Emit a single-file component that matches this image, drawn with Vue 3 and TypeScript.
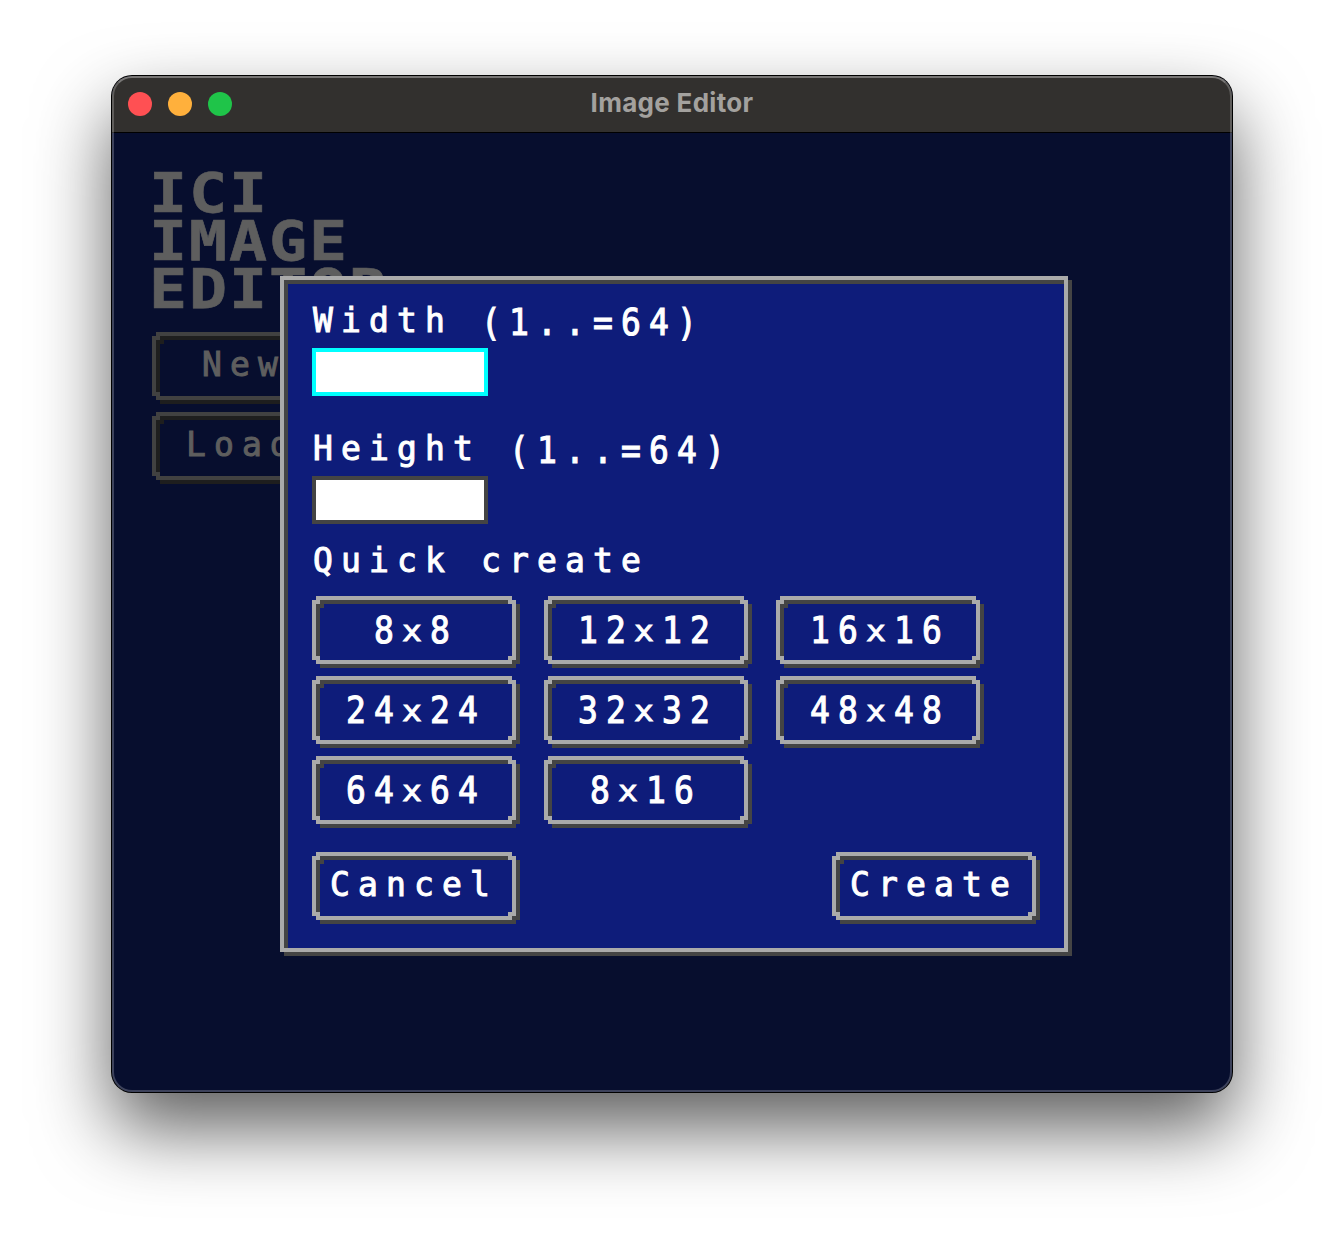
<script setup lang="ts">
import { defineComponent, h } from 'vue'

// Letters sit on a 24px cap height, figures and signs on a taller 28px one.
const runClass = (run: string): string => {
  if (run === 'x') return 'run times'
  return /[A-Za-z ]/.test(run) ? 'run' : 'run tall'
}

const PixelText = defineComponent({
  props: { text: { type: String, required: true } },
  setup(props) {
    return () =>
      h(
        'span',
        { class: 'pixel-text' },
        (props.text.match(/[A-Za-z ]+|[^A-Za-z ]+/g) ?? []).map((run) =>
          h('span', { class: runClass(run) }, run),
        ),
      )
  },
})

// Stepped-corner button outline, drawn on a 4px grid.
const PixelButton = defineComponent({
  props: {
    label: { type: String, required: true },
    width: { type: Number, default: 204 },
  },
  setup(props) {
    return () => {
      const w = props.width
      const light =
        `M4 0H${w - 4}V4H4Z M0 4H4V64H0Z M4 4H8V8H4Z M${w - 8} 4H${w - 4}V8H${w - 8}Z ` +
        `M${w - 4} 4H${w}V64H${w - 4}Z M4 64H${w - 4}V68H4Z M4 60H8V64H4Z M${w - 8} 60H${w - 4}V64H${w - 8}Z`
      const dark =
        `M8 4H${w - 8}V8H8Z M4 8H8V60H4Z M8 8H12V12H8Z M${w} 8H${w + 4}V68H${w}Z ` +
        `M${w - 4} 64H${w}V68H${w - 4}Z M8 68H${w}V72H8Z`
      return h(
        'button',
        {
          type: 'button',
          class: ['pixel-button', { odd: props.label.length % 2 === 1 }],
          style: { width: `${w}px` },
        },
        [
          h('svg', { class: 'frame', width: w + 4, height: 72, 'aria-hidden': 'true' }, [
            h('path', { class: 'dark', d: dark }),
            h('path', { class: 'light', d: light }),
          ]),
          h(PixelText, { text: props.label }),
        ],
      )
    }
  },
})

const sizes: string[] = ['8x8', '12x12', '16x16', '24x24', '32x32', '48x48', '64x64', '8x16']
</script>

<template>
  <div class="desktop">
    <div class="window">
      <header class="titlebar">
        <div class="lights">
          <i class="close"></i>
          <i class="minimise"></i>
          <i class="zoom"></i>
        </div>
        <span class="caption">Image Editor</span>
      </header>

      <main class="content">
        <h1 class="logo">
          <span>ICI</span>
          <span>IMAGE</span>
          <span>EDITOR</span>
        </h1>
        <nav class="menu">
          <PixelButton label="New" :width="180" />
          <PixelButton label="Load" :width="180" />
        </nav>

        <section class="modal">
          <PixelText class="label" text="Width (1..=64)" />
          <input class="field" aria-label="Width" />
          <PixelText class="label second" text="Height (1..=64)" />
          <input class="field plain" aria-label="Height" />
          <PixelText class="label third" text="Quick create" />
          <div class="sizes">
            <PixelButton v-for="s in sizes" :key="s" :label="s" />
          </div>
          <footer class="actions">
            <PixelButton label="Cancel" />
            <PixelButton label="Create" />
          </footer>
        </section>
      </main>
    </div>
  </div>
</template>

<style>
body {
  margin: 0;
  background: #fff;
}
.pixel-text {
  display: flex;
  height: 32px;
  font: 33px/32px 'DejaVu Sans Mono', monospace;
  letter-spacing: 8.13px;
  white-space: pre;
  -webkit-text-stroke: 1px currentColor;
}
.pixel-text .run {
  display: block;
}
.pixel-text .tall {
  transform: scaleY(1.14);
  transform-origin: 0 3px;
}
.pixel-text .times {
  transform: translateY(1px) scaleY(0.88);
  transform-origin: 0 27px;
}
.pixel-button {
  position: relative;
  display: flex;
  justify-content: center;
  box-sizing: border-box;
  height: 68px;
  margin: 0;
  padding: 17px 0 0;
  border: 0;
  background: none;
  color: inherit;
}
.pixel-button.odd {
  padding-left: 4px;
}
.pixel-button .frame {
  position: absolute;
  left: 0;
  top: 0;
  shape-rendering: crispEdges;
}
.pixel-button .light {
  fill: var(--light);
}
.pixel-button .dark {
  fill: var(--dark);
}
</style>

<style scoped>
.desktop {
  box-sizing: border-box;
  width: 1344px;
  height: 1240px;
  padding: 76px 112px 0;
  overflow: hidden;
  background: #fff;
}
.window {
  position: relative;
  width: 1120px;
  height: 1016px;
  border-radius: 20px;
  background: #070e2e;
  box-shadow:
    0 0 0 1px #000,
    0 36px 76px rgba(0, 0, 0, 0.64);
}
.window::after {
  content: '';
  position: absolute;
  inset: 0;
  border: 2px solid rgba(255, 255, 255, 0.22);
  border-top-color: rgba(255, 255, 255, 0.34);
  border-radius: 20px;
  pointer-events: none;
}
.titlebar {
  position: relative;
  display: flex;
  align-items: center;
  justify-content: center;
  box-sizing: border-box;
  height: 57px;
  border-bottom: 1px solid #000;
  border-radius: 20px 20px 0 0;
  background: #32302e;
}
.lights {
  position: absolute;
  left: 16px;
  top: 16px;
  display: flex;
  gap: 16px;
}
.lights i {
  width: 24px;
  height: 24px;
  border-radius: 50%;
}
.close {
  background: #ff5053;
}
.minimise {
  background: #ffb03c;
}
.zoom {
  background: #1fc449;
}
.caption {
  margin-top: -2px;
  font: 700 26px/32px Inter, sans-serif;
  letter-spacing: 0.3px;
  color: #a3a19e;
}
.content {
  --light: #414141;
  --dark: #1e1e1e;
  padding: 36px 40px 0;
  color: #5e5e5e;
}
.logo {
  display: flex;
  flex-direction: column;
  margin: 0 0 19px -3px;
  font: 700 55px/48px 'DejaVu Sans Mono', monospace;
  letter-spacing: 1.67px;
  -webkit-text-stroke: 0.6px currentColor;
  transform: scaleX(1.15);
  transform-origin: 0 0;
}
.menu {
  display: flex;
  flex-direction: column;
  gap: 12px;
}
.modal {
  --light: #aaa;
  --dark: #444;
  position: absolute;
  left: 168px;
  top: 200px;
  display: flex;
  flex-direction: column;
  box-sizing: border-box;
  width: 788px;
  height: 676px;
  padding: 25px 28px 0;
  border: 4px solid var(--light);
  background: #0e1c7a;
  box-shadow:
    inset 4px 4px 0 var(--dark),
    4px 4px 0 var(--dark);
  color: #fff;
}
.label {
  margin: 0 0 11px 1px;
}
.second {
  margin-top: 37px;
}
.third {
  margin-top: 21px;
  margin-bottom: 19px;
}
.field {
  box-sizing: border-box;
  width: 176px;
  height: 48px;
  margin: 0;
  padding: 0 8px;
  border: 4px solid #0ff;
  border-radius: 0;
  outline: 0;
  background: #fff;
  font: 28px 'DejaVu Sans Mono', monospace;
}
.field.plain {
  border-color: #444;
}
.sizes {
  display: grid;
  grid-template-columns: repeat(3, 204px);
  gap: 12px 28px;
}
.actions {
  display: flex;
  justify-content: space-between;
  margin-top: 28px;
}
</style>
